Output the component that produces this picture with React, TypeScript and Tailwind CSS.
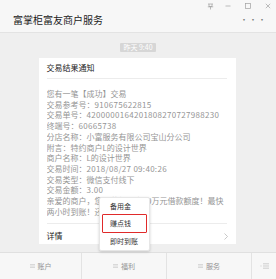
const lines: [string, string][] = [
  ['您有一笔【成功】交易', ''],
  ['交易参考号：', '910675622815'],
  ['交易单号：', '4200000164201808270727988230'],
  ['终端号：', '60665738'],
  ['分店名称：小富服务有限公司宝山分公司', ''],
  ['附言：特约商户L的设计世界', ''],
  ['商户名称：L的设计世界', ''],
  ['交易时间：', '2018/08/27 09:40:26'],
  ['交易类型：微信支付线下', ''],
  ['交易金额：', '3.00'],
  ['亲爱的商户，您已获得最高10万元借款额度！最快', ''],
  ['两小时到账！还款', ''],
];

const tabs = ['账户', '福利', '服务'];

function MenuIcon() {
  return (
    <svg width="5" height="4" viewBox="0 0 5 4" className="mr-[3px]">
      <path d="M0 0.5h5M0 2h5M0 3.5h5" stroke="#d0d0d0" strokeWidth="0.8" />
    </svg>
  );
}

export default function App() {
  return (
    <div
      className="relative flex h-[279px] w-[276px] flex-col overflow-hidden bg-[#efefef]"
      style={{ fontFamily: '"Noto Sans CJK SC", "Noto Sans", sans-serif' }}
    >
      {/* header */}
      <div className="h-[33px] shrink-0 border-b border-[#e3e3e3] bg-[#f7f7f7]">
        <div className="flex h-[12px] items-center justify-end pr-[5px]">
          <svg width="7" height="7" viewBox="0 0 7 7" className="mr-[11px]">
            <path d="M1 1h5M2 1v2.5h3V1M0.8 3.8h5.4M3.5 3.8V6.5" stroke="#a0a0a0" strokeWidth="0.7" fill="none" />
          </svg>
          <svg width="6" height="6" viewBox="0 0 6 6" className="mr-[14px]">
            <path d="M0.5 3h5" stroke="#a0a0a0" strokeWidth="0.7" />
          </svg>
          <svg width="6" height="6" viewBox="0 0 6 6" className="mr-[14px]">
            <rect x="0.5" y="0.5" width="5" height="5" stroke="#a0a0a0" strokeWidth="0.7" fill="none" />
          </svg>
          <svg width="6" height="6" viewBox="0 0 6 6">
            <path d="M0.8 0.8l4.4 4.4M5.2 0.8L0.8 5.2" stroke="#a0a0a0" strokeWidth="0.7" />
          </svg>
        </div>
        <div className="flex h-[16px] items-center justify-between pl-[13px] pr-[9px]">
          <span className="text-[10px] leading-none text-[#222]">富掌柜富友商户服务</span>
          <span className="text-[8px] leading-none tracking-[1px] text-[#777]">···</span>
        </div>
      </div>

      {/* chat body */}
      <div className="flex flex-1 flex-col items-center pt-[10px]">
        <div className="flex h-[9px] items-center rounded-[1px] bg-[#d6d6d6] px-[3px] text-[7px] leading-none text-white">
          昨天 9:40
        </div>
        <div className="mt-[6px] ml-[-2px] flex w-[197px] flex-col bg-white pl-[8px] pr-[9px]">
          <div className="flex h-[21px] items-center border-b border-[#ececec] text-[8px] text-[#222]">
            交易结果通知
          </div>
          <div className="pt-[10px] pb-[6px] text-[8px] leading-[10.7px] text-[#959595] whitespace-nowrap">
            {lines.map(([label, value]) => (
              <div key={label + value} className="overflow-hidden">
                {label}
                {value && <span className="tracking-[0.3px]">{value}</span>}
              </div>
            ))}
          </div>
          <div className="flex h-[21px] items-center justify-between border-t border-[#ececec] pt-[4px] text-[8px] text-[#222]">
            <span>详情</span>
            <svg width="4" height="7" viewBox="0 0 4 7" className="mr-[-1px]">
              <path d="M0.5 0.5l3 3-3 3" stroke="#b0b0b0" strokeWidth="0.7" fill="none" />
            </svg>
          </div>
        </div>
      </div>

      {/* bottom tabs */}
      <div className="flex h-[27px] shrink-0 border-t border-[#e0e0e0] bg-[#f7f7f7]">
        {tabs.map((t, i) => (
          <div
            key={t}
            className={`flex items-center justify-center border-r border-[#e3e3e3] text-[7px] text-[#939393] ${i === 0 ? 'w-[82px]' : 'w-[85px]'}`}
          >
            <MenuIcon />
            {t}
          </div>
        ))}
        <div className="flex flex-1 items-center justify-center">
          <svg width="9" height="6" viewBox="0 0 9 6">
            <path d="M0.5 3h1M3 0.8h6M3 3h6M3 5.2h6" stroke="#bcbcbc" strokeWidth="0.7" />
          </svg>
        </div>
      </div>

      {/* popup menu */}
      <div className="absolute left-[99px] top-[197px] flex h-[54px] w-[51px] flex-col rounded-[2px] border border-[#e6e6e6] bg-white text-[7px] text-[#333] shadow-[0_1px_3px_rgba(0,0,0,0.18)]">
        <div className="flex h-[16px] items-center pl-[10px]">备用金</div>
        <div className="mx-[2px] flex h-[20px] items-center rounded-[1px] border-[1.5px] border-[#e02a2a] pl-[7px]">
          赚点钱
        </div>
        <div className="flex h-[17px] items-center pl-[10px]">即时到账</div>
      </div>
    </div>
  );
}
